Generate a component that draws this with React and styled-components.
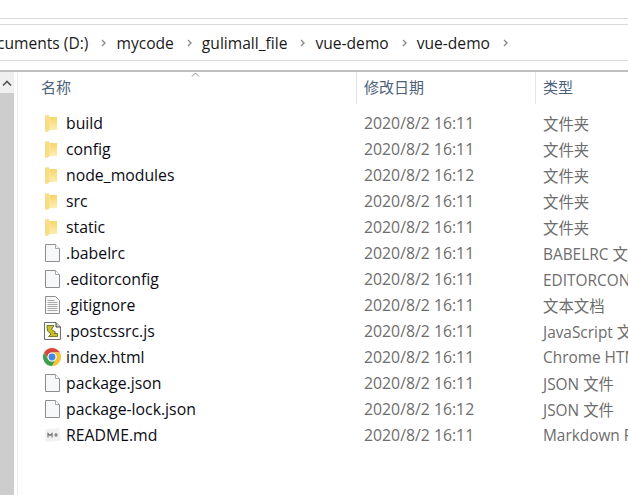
import React from 'react';
import styled, { createGlobalStyle } from 'styled-components';

const GlobalStyle = createGlobalStyle`
  html, body {
    margin: 0;
    padding: 0;
    height: 100%;
    overflow: hidden;
    background: #fff;
    font-family: "Open Sans", "Noto Sans", "Noto Sans CJK SC", sans-serif;
  }
`;

const Page = styled.div`
  width: 628px;
  height: 495px;
  display: flex;
  flex-direction: column;
  overflow: hidden;
`;

const TopStrip = styled.div`
  height: 18px;
  flex: none;
  border-bottom: 1px solid #d9d9d9;
  box-sizing: content-box;
`;

const AddressBar = styled.div`
  height: 35px;
  margin-top: 5px;
  flex: none;
  display: flex;
  align-items: center;
  border-top: 1px solid #d9d9d9;
  border-bottom: 1px solid #d9d9d9;
  font-size: 15.6px;
  color: #1a1a1a;
  white-space: nowrap;
  overflow: hidden;
`;

const Crumb = styled.span`
  margin-left: ${(p) => p.$left || 0}px;
`;

const Chevron = styled.svg`
  width: 5px;
  height: 8px;
  margin-left: 13px;
  margin-right: 10px;
  flex: none;
`;

const Body = styled.div`
  flex: 1;
  margin-top: 9px;
  border-top: 2px solid #bfbfbf;
  display: flex;
  min-height: 0;
`;

const ScrollTrack = styled.div`
  width: 14px;
  flex: none;
  display: flex;
  flex-direction: column;
  background: #f0f0f0;
`;

const ScrollButton = styled.div`
  height: 21px;
  flex: none;
  display: flex;
  align-items: center;
  justify-content: center;
`;

const ScrollThumb = styled.div`
  flex: 1;
  background: #cdcdcd;
`;

const ListPane = styled.div`
  flex: 1;
  min-width: 0;
  margin-left: 3px;
  border-left: 1px solid #ededed;
  overflow: hidden;
`;

const HeaderRow = styled.div`
  height: 32px;
  display: grid;
  grid-template-columns: 339px 179px 200px;
  margin-bottom: 6px;
`;

const HeaderCell = styled.div`
  position: relative;
  display: flex;
  align-items: center;
  padding-left: ${(p) => p.$pad || 7}px;
  padding-bottom: 4px;
  font-size: 15px;
  color: #4c607a;
  border-right: ${(p) => (p.$last ? 'none' : '1px solid #e5e5e5')};
  white-space: nowrap;
`;

const SortCaret = styled.svg`
  position: absolute;
  left: 173px;
  top: 0;
  width: 9px;
  height: 5px;
`;

const Row = styled.div`
  height: 26px;
  display: grid;
  grid-template-columns: 339px 179px 200px;
  align-items: center;
  font-size: 15.8px;
  white-space: nowrap;
`;

const NameCell = styled.div`
  display: flex;
  align-items: center;
  color: #0b0b14;
`;

const IconSlot = styled.div`
  width: 20px;
  height: 20px;
  margin-left: 24px;
  margin-right: 4px;
  flex: none;
  display: flex;
  align-items: center;
  justify-content: center;
`;

const DateCell = styled.div`
  padding-left: 7px;
  color: #6d6d6d;
`;

const TypeCell = styled.div`
  padding-left: 7px;
  font-size: 15.4px;
  color: #6d6d6d;
`;

const FolderIcon = () => (
  <svg width="20" height="20" viewBox="0 0 20 20">
    <defs>
      <linearGradient id="fold" x1="0" x2="0" y1="0" y2="1">
        <stop offset="0" stopColor="#f8d568" />
        <stop offset="1" stopColor="#fdeeb4" />
      </linearGradient>
    </defs>
    <path d="M3 2.5h4l1 1.5h7v13H8L6 18.5H3z" fill="#fbe39a" />
    <path d="M8 4h7v13H8z" fill="url(#fold)" />
    <path d="M3 2.5h4V16.5L6 18.5H3z" fill="#f9dc85" />
  </svg>
);

const PlainDocIcon = () => (
  <svg width="20" height="20" viewBox="0 0 20 20">
    <path
      d="M3.5 1.5H13.5L17.5 5.5V18.5H3.5z"
      fill="#f6f8fa"
      stroke="#8e8e8e"
    />
    <path d="M13.5 1.5V5.5H17.5" fill="#fff" stroke="#a8a8a8" />
  </svg>
);

const TextDocIcon = () => (
  <svg width="20" height="20" viewBox="0 0 20 20">
    <path
      d="M3.5 1.5H13.5L17.5 5.5V18.5H3.5z"
      fill="#f8f8f8"
      stroke="#8e8e8e"
    />
    <path
      d="M5.5 5.5h7M5.5 7.5h10M5.5 9.5h10M5.5 11.5h10M5.5 13.5h10M5.5 15.5h10"
      stroke="#a9a9a9"
      fill="none"
    />
  </svg>
);

const ScriptIcon = () => (
  <svg width="20" height="20" viewBox="0 0 20 20">
    <path d="M2.5 1.5H14L18.5 6V18.5H2.5z" fill="#fbfbf5" stroke="#6e6e6e" />
    <path d="M14 1.5V6H18.5" fill="#ccc" stroke="#444" />
    <path
      d="M5 4.5h7L9.5 8.5l4 2.5-1.5 1.5H15.5v3H6.5L9 13 5.5 10z"
      fill="#c4bf2a"
      stroke="#5f5f1e"
      strokeWidth="0.8"
    />
  </svg>
);

const ChromeIcon = () => (
  <svg width="20" height="20" viewBox="0 0 20 20">
    <path d="M2.2 5.5A9 9 0 0 1 17.8 5.5H10A4.5 4.5 0 0 0 6.1 12.25Z" fill="#d9473b" />
    <path d="M17.8 5.5A9 9 0 0 1 10 19L13.9 12.25A4.5 4.5 0 0 0 10 5.5Z" fill="#f4c532" />
    <path d="M10 19A9 9 0 0 1 2.2 5.5L6.1 12.25A4.5 4.5 0 0 0 13.9 12.25Z" fill="#3fa04f" />
    <circle cx="10" cy="10" r="4.5" fill="#f4f4f4" />
    <circle cx="10" cy="10" r="3.4" fill="#4a86e0" />
  </svg>
);

const MarkdownIcon = () => (
  <svg width="20" height="20" viewBox="0 0 20 20">
    <path d="M3 4.5L17 3 19 15.5 4 17z" fill="#f1f1f1" />
    <path
      d="M6 12.5V8.5l2 2 2-2v4M14 8v4M12.2 10h3.6"
      fill="none"
      stroke="#6e6e6e"
      strokeWidth="1.1"
    />
  </svg>
);

const crumbs = ['mycode', 'gulimall_file', 'vue-demo', 'vue-demo'];

const files = [
  { name: 'build', date: '2020/8/2 16:11', type: '文件夹', Icon: FolderIcon },
  { name: 'config', date: '2020/8/2 16:11', type: '文件夹', Icon: FolderIcon },
  { name: 'node_modules', date: '2020/8/2 16:12', type: '文件夹', Icon: FolderIcon },
  { name: 'src', date: '2020/8/2 16:11', type: '文件夹', Icon: FolderIcon },
  { name: 'static', date: '2020/8/2 16:11', type: '文件夹', Icon: FolderIcon },
  { name: '.babelrc', date: '2020/8/2 16:11', type: 'BABELRC 文件', Icon: PlainDocIcon },
  { name: '.editorconfig', date: '2020/8/2 16:11', type: 'EDITORCONFIG 文件', Icon: PlainDocIcon },
  { name: '.gitignore', date: '2020/8/2 16:11', type: '文本文档', Icon: TextDocIcon },
  { name: '.postcssrc.js', date: '2020/8/2 16:11', type: 'JavaScript 文件', Icon: ScriptIcon },
  { name: 'index.html', date: '2020/8/2 16:11', type: 'Chrome HTML Document', Icon: ChromeIcon },
  { name: 'package.json', date: '2020/8/2 16:11', type: 'JSON 文件', Icon: PlainDocIcon },
  { name: 'package-lock.json', date: '2020/8/2 16:12', type: 'JSON 文件', Icon: PlainDocIcon },
  { name: 'README.md', date: '2020/8/2 16:11', type: 'Markdown File', Icon: MarkdownIcon },
];

const ChevronMark = () => (
  <Chevron viewBox="0 0 5 8">
    <path d="M1 1l3 3-3 3" fill="none" stroke="#8a8a8a" strokeWidth="1.4" />
  </Chevron>
);

const App = () => (
  <Page>
    <GlobalStyle />
    <TopStrip />
    <AddressBar>
      <Crumb $left={-3}>cuments (D:)</Crumb>
      <ChevronMark />
      {crumbs.map((c, i) => (
        <React.Fragment key={i}>
          <Crumb>{c}</Crumb>
          <ChevronMark />
        </React.Fragment>
      ))}
    </AddressBar>
    <Body>
      <ScrollTrack>
        <ScrollButton>
          <svg width="10" height="6" viewBox="0 0 10 6">
            <path d="M1 5.5L5 1.5l4 4" fill="none" stroke="#555" strokeWidth="1.6" />
          </svg>
        </ScrollButton>
        <ScrollThumb />
      </ScrollTrack>
      <ListPane>
        <HeaderRow>
          <HeaderCell $pad={23}>
            名称
            <SortCaret viewBox="0 0 9 5">
              <path d="M1 4.5l3.5-3.5L8 4.5" fill="none" stroke="#8a8a8a" />
            </SortCaret>
          </HeaderCell>
          <HeaderCell>修改日期</HeaderCell>
          <HeaderCell $last>类型</HeaderCell>
        </HeaderRow>
        {files.map(({ name, date, type, Icon }) => (
          <Row key={name}>
            <NameCell>
              <IconSlot>
                <Icon />
              </IconSlot>
              {name}
            </NameCell>
            <DateCell>{date}</DateCell>
            <TypeCell>{type}</TypeCell>
          </Row>
        ))}
      </ListPane>
    </Body>
  </Page>
);

export default App;
